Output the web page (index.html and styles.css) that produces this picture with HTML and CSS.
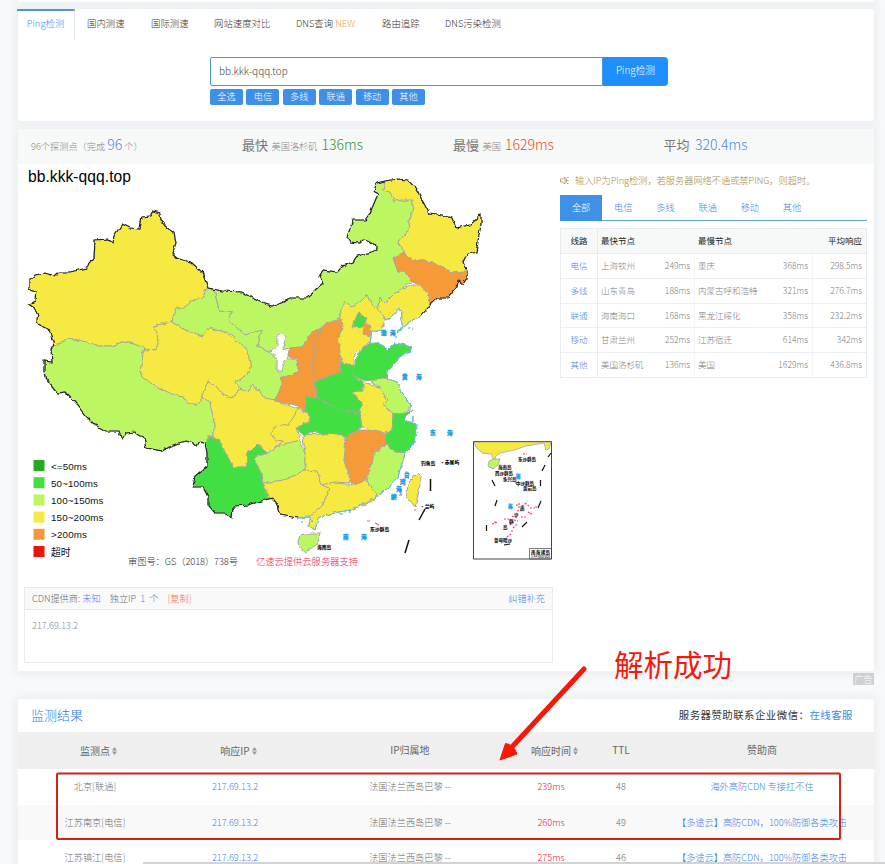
FILE: index.html
```html
<!DOCTYPE html>
<html lang="zh-CN">
<head>
<meta charset="utf-8">
<title>Ping检测</title>
<link rel="stylesheet" href="styles.css">
</head>
<body>
<div class="page">
  <div class="top-strip"></div>

  <section class="panel query">
    <nav class="nav">
      <a class="nav-item active">Ping检测</a>
      <a class="nav-item n1">国内测速</a>
      <a class="nav-item n2">国际测速</a>
      <a class="nav-item n3">网站速度对比</a>
      <a class="nav-item n4">DNS查询 <em>NEW</em></a>
      <a class="nav-item n5">路由追踪</a>
      <a class="nav-item n6">DNS污染检测</a>
    </nav>
    <div class="search">
      <div class="search-row">
        <div class="search-input">bb.kkk-qqq.top</div>
        <div class="search-btn">Ping检测</div>
      </div>
      <div class="chips"><span>全选</span><span>电信</span><span>多线</span><span>联通</span><span>移动</span><span>其他</span></div>
    </div>
  </section>

  <section class="panel report">
    <div class="stats">
      <div class="stat small"><span>96个探测点（完成 <b class="blue">96</b> 个）</span></div>
      <div class="stat"><span><strong>最快</strong> 美国洛杉矶 <b class="green">136ms</b></span></div>
      <div class="stat"><span><strong>最慢</strong> 美国 <b class="orange">1629ms</b></span></div>
      <div class="stat"><span><strong>平均</strong> <b class="blue">320.4ms</b></span></div>
    </div>
    <div class="report-body">
      <div class="left">
        <svg class="map" width="542" height="416" viewBox="18 164 542 416">
          <defs>
            <filter id="rough" x="-5%" y="-5%" width="110%" height="110%">
              <feTurbulence type="fractalNoise" baseFrequency="0.16" numOctaves="2" seed="4"/>
              <feDisplacementMap in="SourceGraphic" scale="4.500" xChannelSelector="R" yChannelSelector="G"/>
            </filter>
          </defs>
          <text class="map-title" x="28" y="182" textLength="103">bb.kkk-qqq.top</text>
          <g filter="url(#rough)">
            <g class="prov">
              <path class="y" d="M53.7 345L49.7 331 43.3 328 36.7 322 37.7 315 34.3 308 28.3 304 35 301 35.7 292 29 289 29 280 35 275 45 273 54 276 58 272 70 272 87 268 89 263 94 258 95 240 108 239 113 242 114 236 122 224 130 228 140 229 142 217 150 216 153 211 160 213 161 220 165 226 174 232 176 243 172 254 178 259 191 262 202 272 205 280 208 288 205 290 204 296 192 301 185 307 177 308 171 322 154 326 156 333 159 339 156 350 145 349 135 344 122 342 112 346 98 346 87 342 78 340 69 338 62 343Z"/>
              <path class="l" d="M53.7 345L51 350 52 362 44 361 44 372 45 377 58 393 65 392 77 405 85 415 95 425 105 431 119 431 122 439 126 433 135 432 145 438 147 448 162 451 173 445 185 441 193 443 197 446 200 441 205 443 209 436 214 437 214 420 210 403 203 397 197 404 190 404 182 397 168 392 152 384 143 377 140 370 142 365 143 352 145 349 135 344 122 342 112 346 98 346 87 342 78 340 69 338 62 343Z"/>
              <path class="l" d="M208 288L222 291 242 292 252 298 262 303 272 306 290 298 307 298 323 284 319 277 323 270 337 272 343 266 353 262 357 256 377 250 377 247 370 241 364 239 360 243 350 242 347 237 353 220 365 220 370 213 378 194 374 190 377 183 385 181 383 190 390 192 394 201 402 200 413 200 413 208 408 230 398 243 402 247 403 252 393 258 398 272 405 272 412 282 395 293 385 303 380 298 378 313 372 307 367 295 360 302 352 307 345 301 340 312 340 318 327 322 320 330 312 332 302 347 290 348 270 352 257 345 262 330 245 335 228 320 232 312 219 310 214 290Z"/>
              <path class="l" d="M205 290L214 290 219 310 232 312 228 320 245 335 262 330 257 345 270 352 285 358 298 360 298 372 282 378 280 390 275 400 265 398 260 392 252 385 248 392 240 391 235 382 245 377 249 372 251 362 245 348 228 333 208 328 202 337 185 330 171 322 177 308 185 307 192 301 204 296Z"/>
              <path class="y" d="M156 350L159 339 156 333 154 326 171 322 185 330 202 337 208 328 228 333 245 348 251 362 248 375 235 382 240 388 233 398 222 394 215 385 208 381 204 390 203 397 197 404 190 404 182 397 168 392 152 384 143 377 140 370 142 365 143 352 145 349Z"/>
              <path class="w" d="M283 333L286 337 282 350 289 352 288 357 283 362 283 371 277 371 277 359 271 352 277 345 277 337Z"/>
              <path class="y" d="M385 181L397 179 408 180 417 190 422 200 429 213 443 215 452 218 456 228 470 225 481 215 481 224 479 235 476 252 467 254 463 262 467 272 452 273 443 267 433 263 423 260 412 260 403 252 402 247 398 243 408 230 413 208 413 200 402 200 394 201 390 192 383 190Z"/>
              <path class="o" d="M393 258L403 252 412 260 423 260 433 263 443 267 452 273 467 272 467 278 463 284 458 280 457 287 448 298 437 298 430 305 427 293 420 285 412 282 405 272 398 272Z"/>
              <path class="y" d="M430 305L422 315 410 322 398 332 403 325 400 320 403 312 398 309 392 317 387 320 378 313 380 298 385 303 395 293 412 285 420 285 427 293Z"/>
              <path class="y" d="M340 312L345 301 352 307 360 302 367 295 372 307 378 308 385 320 382 330 372 332 370 342 362 347 353 358 353 365 342 363 338 338 343 328 340 318Z"/>
              <path class="g" d="M358 313L367 318 363 327 353 328 355 320Z"/>
              <path class="o" d="M365 322L371 327 370 337 363 335Z"/>
              <path class="o" d="M290 348L302 347 312 332 320 330 315 347 313 370 314 382 318 397 306 397 305 412 295 405 275 400 280 390 282 378 298 372 298 360 288 356Z"/>
              <path class="o" d="M320 330L327 322 342 319 343 328 338 338 341 363 340 372 330 376 314 382 313 370 315 347Z"/>
              <path class="g" d="M353 365L363 347 373 342 383 345 387 351 395 343 412 346 410 351 398 358 388 372 387 378 373 380 365 381 353 375Z"/>
              <path class="g" d="M341 363L353 365 353 375 365 383 363 390 353 392 357 398 362 405 360 413 342 410 330 405 318 398 314 382 330 376 340 372Z"/>
              <path class="g" d="M306 397L318 398 330 405 342 410 360 413 362 427 358 430 347 438 337 433 323 434 315 432 303 435 300 433 297 427 311 422 309 413 305 412Z"/>
              <path class="y" d="M363 382L370 385 380 387 388 400 383 405 393 415 392 430 385 432 373 430 362 427 360 413 362 405 357 398 353 392 363 390Z"/>
              <path class="l" d="M370 382L385 377 397 382 402 395 412 405 405 413 395 415 383 405 388 400 380 387Z"/>
              <path class="g" d="M393 415L405 413 413 410 403 420 415 423 417 433 413 445 405 453 395 452 387 445 385 433 392 430Z"/>
              <path class="o" d="M347 437L358 430 373 430 385 433 387 445 374 452 367 480 352 485 350 477 344 460Z"/>
              <path class="l" d="M387 445L395 452 405 453 398 477 385 490 377 497 367 481 370 467 375 452Z"/>
              <path class="y" d="M203 397L210 403 214 420 214 437 223 448 233 467 247 467 248 453 257 445 267 453 285 450 300 440 297 427 311 422 309 413 305 412 275 400 265 398 260 392 252 385 248 392 240 388 233 398 222 394 215 385 208 381 204 390Z"/>
              <path class="n" d="M297 408L295 415 288 425 275 427 271 433 276 440 283 441 272 450"/>
              <path class="l" d="M255 457L268 453 280 445 300 440 305 453 305 470 285 480 263 483 262 473 255 463Z"/>
              <path class="y" d="M303 435L323 434 337 433 346 438 344 460 350 483 335 482 322 485 317 472 305 470 305 453Z"/>
              <path class="g" d="M205 443L210 436 218 440 223 448 233 467 247 467 248 453 257 444 267 453 255 457 255 463 262 473 262 483 274 490 273 498 265 500 248 505 233 506 232 518 225 513 215 513 208 505 208 497 203 487 193 487 195 477 207 467 207 453Z"/>
              <path class="y" d="M262 483L285 480 305 470 317 471 322 485 329 488 323 505 310 517 298 518 280 515 277 505 270 498Z"/>
              <path class="y" d="M322 485L335 482 350 485 367 481 377 493 375 500 350 510 333 513 318 518 315 530 308 525 310 517 323 505 329 488Z"/>
              <path class="l" d="M320 533L317 545 305 552 297 545 300 535 310 533Z"/>
              <path class="y" d="M418 473L422 477 415 508 407 497 408 483Z"/>
            </g>
            <path class="coast" d="M422 315L410 322 398 332 403 325 400 320 403 312 398 309 392 317 385 320 382 330 372 332 370 342 383 345 387 351 395 343 412 346 410 351 398 358 388 372 387 378 397 382 402 395 412 405 403 420 415 423 417 433 413 445 405 453 398 477 385 490 377 497 350 510 333 513 318 518 315 530 308 525 310 517 298 518"/>
            <path class="border" d="M298 518L280 515 277 505 273 498 265 500 248 505 233 506 232 518 225 513 215 513 208 505 208 497 203 487 193 487 195 477 207 467 207 453 205 443 200 441 197 446 193 443 185 441 173 445 162 451 147 448 145 438 135 432 126 433 122 439 119 431 105 431 95 425 85 415 77 405 65 392 58 393 45 377 44 372 44 361 52 362 51 350 53.7 345 49.7 331 43.3 328 36.7 322 37.7 315 34.3 308 28.3 304 35 301 35.7 292 29 289 29 280 35 275 45 273 54 276 58 272 70 272 87 268 89 263 94 258 95 240 108 239 113 242 114 236 122 224 130 228 140 229 142 217 150 216 153 211 160 213 161 220 165 226 174 232 176 243 172 254 178 259 191 262 202 272 205 280 208 288 222 291 242 292 252 298 262 303 272 306 290 298 307 298 323 284 319 277 323 270 337 272 343 266 353 262 357 256 377 250 377 247 370 241 364 239 360 243 350 242 347 237 353 220 365 220 370 213 378 194 374 190 377 183 385 181 397 179 408 180 417 190 422 200 429 213 443 215 452 218 456 228 470 225 481 215 481 224 479 235 476 252 467 254 463 262 467 272 467 278 463 284 458 280 457 287 448 298 437 298 430 305 422 315"/>
          </g>
          <g class="dashes"><path d="M430.500 479v12M425 509l-6 11M409 540l-4 13"/></g>
          <g class="specks">
            <path d="M408 328h2M412 329h1M395 337h2M413 416v6M416 425h2M410 446h2M350 509v4M340 514h3M301 522h2M311 521h2M401 489v6M399 492h2" />
          </g>
          <g class="specks pink"><path d="M399 495h3M367 521h3M375 523l4 2M414 510h2"/></g>
          <g class="sea">
            <text x="381" y="335">渤</text><text x="390" y="335">海</text>
            <text x="402" y="379">黄</text><text x="416" y="379">海</text>
            <text x="430" y="435">东</text><text x="447" y="435">海</text>
            <text x="404" y="477">台</text><text x="400" y="484">湾</text><text x="396" y="491">海</text><text x="391" y="499">峡</text>
            <text x="343" y="539">南</text><text x="361" y="539">海</text>
          </g>
          <g class="tiny">
            <text x="421" y="465">钓鱼岛</text><text x="440" y="464">·赤尾屿</text>
            <text x="420" y="508">·兰屿</text><text x="370" y="531">东沙群岛</text><text x="317" y="549">海南岛</text>
          </g>

          <g class="inset">
            <path class="frame" d="M473.500 441.500h78v117.500h-78z"/>
            <path class="y" d="M474 442h77l-2 7-3 1-2-7-18 3-12 4-14 3-4 3-2 4-2-3 0-3-10-1-6-6z"/>
            <path class="l" d="M489 461l5-2h6l-2 6-5 4-5-3z"/>
            <path class="d" d="M551 453l-3 4M545 465l-3 6M540.500 480v6M541 501l-3 7M527 522l-5 5M492 480l3 6M497 500l-2 6M486.500 525v6M504 545l6-1"/>
            <path class="pk" d="M523 454h4M529 457h2M503 478l2 1M515 483l3-1M516 505h3M525 503l4 3M530 508h5M517 511l6-1M512 516l5 2M521 517h5M528 512l4 2M504 519h5M492 524l6-2M510 525l4-3M515 525h3M511 531h3M507 537l4-3M519 503v5M522 506l3-2M535 507h2M530 514l3-1M514 520l4 1M494 522h3M513 528l2-2"/>
            <text x="518" y="461">东沙群岛</text><text x="498" y="469">海南岛</text><text x="495" y="475">西沙群岛</text><text x="503" y="480.500">永兴岛</text>
            <text x="516" y="485">中沙群岛</text><text x="523" y="490">黄岩岛</text><text x="520" y="510">南</text><text x="514" y="516">沙</text><text x="509" y="523">群</text><text x="503" y="529">岛</text><text x="494" y="542">曾母暗沙</text>
            <g class="sea"><text x="516" y="478">南</text><text x="508" y="508">海</text></g>
            <path class="frame thin" d="M529.500 548.500h22v10.500h-22z"/>
            <text x="531" y="553.500" textLength="19">南海诸岛</text><text class="scale" x="531" y="557.700" textLength="19" lengthAdjust="spacingAndGlyphs">1:44 000 000</text>
          </g>

          <g class="legend">
            <rect x="33.500" y="460" width="11" height="11" fill="#23ab22"/><text x="51" y="470" textLength="36">&lt;=50ms</text>
            <rect x="33.500" y="477.200" width="11" height="11" fill="#42df43"/><text x="51" y="487" textLength="47">50~100ms</text>
            <rect x="33.500" y="494.400" width="11" height="11" fill="#bdf663"/><text x="51" y="504" textLength="52.500">100~150ms</text>
            <rect x="33.500" y="511.600" width="11" height="11" fill="#f6ea42"/><text x="51" y="521" textLength="52.500">150~200ms</text>
            <rect x="33.500" y="528.800" width="11" height="11" fill="#f69939"/><text x="51" y="538" textLength="36">&gt;200ms</text>
            <rect x="33.500" y="546" width="11" height="11" fill="#eb1510"/><text x="51" y="555.500">超时</text>
          </g>
          <text class="note" x="128" y="564.500" textLength="110">审图号：GS（2018）738号</text>
          <text class="note red" x="256" y="564.500" textLength="102">亿速云提供云服务器支持</text>
        </svg>
        <div class="cdn">
          <div class="cdn-head"><span>CDN提供商: <a>未知</a></span><span class="ip-count">独立IP <a>1</a> 个</span><span class="copy">[复制]</span><a class="fix">纠错补充</a></div>
          <div class="cdn-body">217.69.13.2</div>
        </div>
      </div>

      <div class="right">
        <div class="notice"><svg width="9" height="9" viewBox="0 0 9 9"><path d="M.5 3v3h2l2.500 2V1L2.500 3zM6.500 2.500v4M7 1.500h1.500M7 4.500h1.500M7 7.500h1.500"/></svg><span>输入IP为Ping检测，若服务器网络不通或禁PING，则超时。</span></div>
        <div class="tabs"><a class="on">全部</a><a>电信</a><a>多线</a><a>联通</a><a>移动</a><a>其他</a></div>
        <div class="lines">
          <div class="line head"><span class="c">线路</span><span class="f">最快节点</span><span class="s">最慢节点</span><span class="r">平均响应</span></div>
          <div class="line"><a class="c">电信</a><span class="f">上海钦州<i>249ms</i></span><span class="s">重庆<i>368ms</i></span><span class="r">298.5ms</span></div>
          <div class="line"><a class="c">多线</a><span class="f">山东青岛<i>188ms</i></span><span class="s">内蒙古呼和浩特<i>321ms</i></span><span class="r">276.7ms</span></div>
          <div class="line"><a class="c">联通</a><span class="f">海南海口<i>168ms</i></span><span class="s">黑龙江绥化<i>358ms</i></span><span class="r">232.2ms</span></div>
          <div class="line"><a class="c">移动</a><span class="f">甘肃兰州<i>252ms</i></span><span class="s">江苏宿迁<i>614ms</i></span><span class="r">342ms</span></div>
          <div class="line"><a class="c">其他</a><span class="f">美国洛杉矶<i>136ms</i></span><span class="s">美国<i>1629ms</i></span><span class="r">436.8ms</span></div>
        </div>
      </div>
    </div>
  </section>

  <div class="ad-row"><span>广告</span></div>

  <section class="panel results">
    <div class="results-title"><h2>监测结果</h2><p>服务器赞助联系企业微信：<a>在线客服</a></p></div>
    <div class="row thead">
      <span class="sort">监测点<svg width="5" height="8" viewBox="0 0 5 8"><path d="M0 3.500L2.500 0 5 3.500zM0 4.500h5L2.500 8z"/></svg></span>
      <span class="sort">响应IP<svg width="5" height="8" viewBox="0 0 5 8"><path d="M0 3.500L2.500 0 5 3.500zM0 4.500h5L2.500 8z"/></svg></span>
      <span>IP归属地</span>
      <span class="sort">响应时间<svg width="5" height="8" viewBox="0 0 5 8"><path d="M0 3.500L2.500 0 5 3.500zM0 4.500h5L2.500 8z"/></svg></span>
      <span>TTL</span><span>赞助商</span>
    </div>
    <div class="row"><span>北京[联通]</span><a>217.69.13.2</a><span>法国法兰西岛巴黎 --</span><b>239ms</b><span>48</span><a>海外高防CDN 专接扛不住</a></div>
    <div class="row alt"><span>江苏南京[电信]</span><a>217.69.13.2</a><span>法国法兰西岛巴黎 --</span><b>260ms</b><span>49</span><a>【多途云】高防CDN，100%防御各类攻击</a></div>
    <div class="row"><span>江苏镇江[电信]</span><a>217.69.13.2</a><span>法国法兰西岛巴黎 --</span><b>275ms</b><span>46</span><a>【多途云】高防CDN，100%防御各类攻击</a></div>
  </section>

  <svg class="annotation" width="885" height="864" viewBox="0 0 885 864">
    <rect x="57" y="773.500" width="783" height="65.500" rx="1"/>
    <path class="shaft" d="M584 669L511 748"/>
    <path class="tip" d="M500 760L505.500 743.500 509.500 744.500 515 749.500 517 754z"/>
    <text x="614" y="676" textLength="118">解析成功</text>
  </svg>
  <div class="scrollbar"></div>
</div>
</body>
</html>
```
FILE: styles.css
```css
* { box-sizing: border-box; }
body {
  margin: 0;
  background: #f7f9fb;
  font-family: "Noto Sans CJK SC", sans-serif;
  font-weight: 300;
  font-size: 9.2px;
  color: #6c6c6c;
  overflow: hidden;
}
a { color: #3f86e6; text-decoration: none; }
.page { position: relative; width: 885px; height: 864px; padding-left: 18px; overflow: hidden; }
.top-strip { width: 856px; height: 2px; margin-bottom: 7px; background: #fff; box-shadow: 0 1px 8px 2px #e8ecef; }
.panel { width: 856px; background: #fff; border-radius: 2px; box-shadow: 0 0 9px 3px #ebeef1; }

.query { height: 112px; }
.nav { display: flex; height: 30px; line-height: 28px; }
.nav-item { color: #333; font-size: 9.4px; white-space: nowrap; }
.nav-item.active { width: 58px; margin-left: -1px; height: 31px; line-height: 24px; text-align: center; color: #4a95e9; border-top: 2px solid #5192d5; border-right: 1px solid #e5e8ea; }
.nav-item em { color: #eb9f35; font-style: normal; }
.n1 { width: 64px; margin-left: 12px; }
.n2 { width: 63px; }
.n3 { width: 82px; }
.n4 { width: 86px; }
.n5 { width: 63px; }
.search { width: 458px; margin: 18px 0 0 192px; }
.search-row { display: flex; height: 29px; }
.search-input { flex: 1; border: 1px solid #4f95cf; border-radius: 2px 0 0 2px; padding-left: 8px; line-height: 25px; font-size: 10px; color: #444; }
.search-btn { width: 65px; border-radius: 0 4px 4px 0; background: #1e8fff; color: #fff; text-align: center; line-height: 27px; font-size: 9.800px; }
.chips { display: flex; gap: 3.400px; margin-top: 3px; }
.chips span { width: 33px; height: 16px; line-height: 15px; border-radius: 2px; background: #3d8fe7; color: #fff; text-align: center; }

.report { height: 542px; margin-top: 8px; }
.stats { display: grid; grid-template-columns: 211px 211px 210.500px 210px; height: 35px; padding-left: 13px; background: #f7f8f8; color: #888; }
.stat { line-height: 30px; white-space: nowrap; }
.stat strong { margin-right: 1.500px; font-weight: 400; font-size: 13px; color: #777; }
.stat b { margin-left: 2px; font-weight: 300; font-size: 14px; }
.stat.small b { margin-left: 0; }
.stat b.blue { color: #4b89dc; }
.stat b.green { color: #2f9536; }
.stat b.orange { color: #ee4a20; }
.report-body { display: flex; }
.left { width: 542px; }
.map { display: block; }
.map-title { font-family: "Liberation Sans", Arial, sans-serif; font-weight: 400; font-size: 15.600px; fill: #000; }
.prov path { stroke: #a8a89c; stroke-width: 1; stroke-linejoin: round; }
.y { fill: #f6ea42; }
.l { fill: #bdf663; }
.g { fill: #42df43; }
.o { fill: #f69939; }
.w { fill: #fff; }
.prov .n { fill: none; }
.border { fill: none; stroke: #262626; stroke-width: 1.200; }
.coast { fill: none; stroke: #67bfd3; stroke-width: 1; }
.dashes path { fill: none; stroke: #111; stroke-width: 1.500; }
.specks path { fill: none; stroke: #3ba9e8; stroke-width: 1.200; }
.specks.pink path { stroke: #ee5a86; }
.sea text { font-size: 5.500px; font-weight: 900; fill: #189ce5; stroke: #189ce5; stroke-width: .3; }
.tiny text { font-size: 4.800px; font-weight: 900; fill: #111; }
.inset text { font-size: 4.500px; font-weight: 900; fill: #222; }
.inset .sea text { font-size: 4.500px; fill: #189ce5; }
.inset text.scale { font-size: 3.500px; font-weight: 500; }
.inset path { stroke: #999; stroke-width: .7; }
.inset .frame { fill: none; stroke: #444; stroke-width: 1; }
.inset .thin { stroke-width: .7; }
.inset .d { fill: none; stroke: #111; stroke-width: 1.200; }
.inset .pk { fill: none; stroke: #ee3f78; stroke-width: 1.200; stroke-dasharray: 2 1.200; }
.legend text { font-family: "Liberation Sans", Arial, "Noto Sans CJK SC", sans-serif; font-weight: 400; font-size: 9.800px; fill: #111; }
.note { font-size: 9.300px; fill: #333; }
.note.red { fill: #ef2148; }

.cdn { width: 529px; height: 76px; margin: 7px 0 0 6px; border: 1px solid #e9eaeb; }
.cdn-head { display: flex; height: 22px; padding: 0 7px; line-height: 20px; background: #f9f9f9; border-bottom: 1px solid #e8e8e8; }
.ip-count { margin-left: 9px; word-spacing: 2px; }
.copy { margin-left: 9px; color: #f07038; }
.fix { margin-left: auto; }
.cdn-body { padding: 5px 7px; line-height: 20px; color: #888; }

.right { width: 307px; }
.notice { display: flex; align-items: center; height: 31px; padding-top: 1px; color: #a58a48; white-space: nowrap; }
.notice svg { margin-right: 6px; fill: none; stroke: #b08d4c; stroke-width: .8; }
.tabs { display: flex; height: 26px; border-bottom: 1px solid #65a0d7; line-height: 25px; text-align: center; }
.tabs a { width: 42.200px; }
.tabs .on { height: 26px; background: #3f90e7; color: #fff; }
.lines { margin-top: 7px; border: 1px solid #e9ebec; font-size: 8.500px; }
.line { display: grid; grid-template-columns: 37px 97px 118px 53px; height: 24.800px; line-height: 22px; border-top: 1px solid #eceeef; color: #7c7c7c; }
.line > * { white-space: nowrap; }
.line .c { text-align: center; border-right: 1px solid #e9ebec; }
.line .f, .line .s { display: flex; justify-content: space-between; padding: 0 4px 0 3px; border-right: 1px solid #f4f5f5; }
.line i { font-style: normal; }
.line .r { text-align: right; padding-right: 4px; }
.line.head { height: 24px; background: #f7f8f8; color: #222; font-weight: 400; border-top: 0; }
.head .f, .head .s { border-right: 0; }
.head .c { color: #222; }

.ad-row { display: flex; justify-content: flex-end; width: 856px; height: 28px; padding-top: 2px; }
.ad-row span { width: 21px; height: 12px; line-height: 12px; text-align: center; background: #cfd0d1; color: #fff; }
.results { height: 180px; }
.results-title { display: flex; justify-content: space-between; height: 33px; padding: 0 21px 0 13px; line-height: 31px; }
.results-title h2 { margin: 0; font-size: 13px; font-weight: 300; color: #2f7dd6; }
.results-title p { margin: 0; font-size: 10.400px; letter-spacing: .5px; font-weight: 400; color: #333; }
.row { display: grid; grid-template-columns: 154px 126px 224px 58px 82px 200px; height: 35.500px; line-height: 34px; text-align: center; }
.row > * { white-space: nowrap; display: flex; justify-content: center; }
.row b { font-weight: 300; color: #e5203f; }
.row.alt { background: #f9f9f9; }
.row.thead { height: 37px; line-height: 36px; background: #efefef; color: #666; font-size: 10px; font-weight: 400; }
.sort { padding-left: 7px; align-items: center; }
.sort svg { margin-left: 2px; fill: #999; }

.annotation { position: absolute; left: 0; top: 0; }
.annotation rect { fill: none; stroke: #cf2318; stroke-width: 2; }
.shaft { stroke: #fb1708; stroke-width: 5; stroke-linecap: round; }
.tip { fill: #fb1708; stroke: #fb1708; stroke-width: 1; }
.annotation text { font-size: 29.500px; font-weight: 400; fill: #f21a0c; }
.scrollbar { position: absolute; left: 143px; right: 0; bottom: 0; height: 2px; background: #d3d3d3; }
```
